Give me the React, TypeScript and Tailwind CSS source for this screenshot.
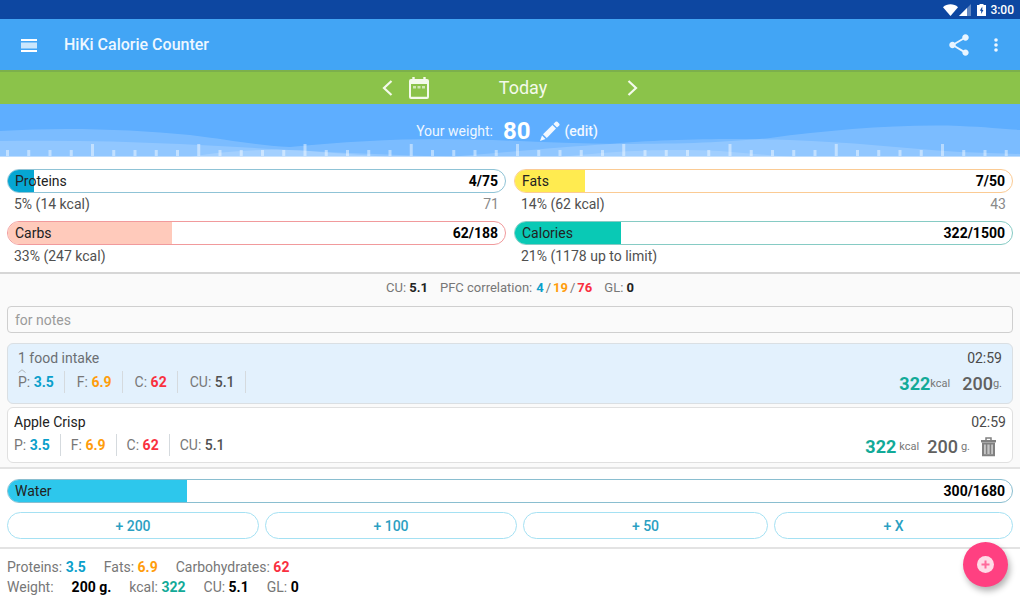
import React from 'react';
import { MdShare } from 'react-icons/md';

type Bar = {
  id: string;
  label: string;
  value: string;
  percent: number;
  fill: string;
  border: string;
  note?: string;
  rest?: string;
};

const leftBars: Bar[] = [
  { id: 'proteins', label: 'Proteins', value: '4/75', percent: 5.2, fill: 'bg-[#06a6d2]', border: 'border-[#8fc3d6]', note: '5% (14 kcal)', rest: '71' },
  { id: 'carbs', label: 'Carbs', value: '62/188', percent: 33, fill: 'bg-[#ffcabb]', border: 'border-[#f19a9c]', note: '33% (247 kcal)' },
];

const rightBars: Bar[] = [
  { id: 'fats', label: 'Fats', value: '7/50', percent: 14, fill: 'bg-[#ffeb50]', border: 'border-[#fbcb94]', note: '14% (62 kcal)', rest: '43' },
  { id: 'calories', label: 'Calories', value: '322/1500', percent: 21.4, fill: 'bg-[#09c9b5]', border: 'border-[#86cbc4]', note: '21% (1178 up to limit)' },
];

const water: Bar = { id: 'water', label: 'Water', value: '300/1680', percent: 17.8, fill: 'bg-[#2dc7ec]', border: 'border-[#8abed0]' };

const ticks = Array.from({ length: 48 }, (_, i) => ({ x: 7.5 + i * 21.25, long: i % 5 === 4 }));

function StatusBar() {
  return (
    <div className="flex h-[19px] items-center justify-end bg-[#0d47a1] pr-1.5 text-white">
      <svg className="h-3 w-[15px]" viewBox="0 0 15 12" fill="currentColor">
        <path d="M0 3.2C4-.6 11-.6 15 3.2L7.5 12z" />
      </svg>
      <svg className="ml-px h-3 w-3" viewBox="0 0 12 12" fill="currentColor">
        <path d="M12 0v12H0z" opacity=".35" />
        <path d="M8 4v8H0z" />
      </svg>
      <svg className="ml-1.5 h-3 w-[9px]" viewBox="0 0 9 12">
        <path d="M2.5 0h4v1H9v11H0V1h2.5z" fill="currentColor" />
        <path d="M5.3 2.5 2.8 6.8h1.4v3.3L6.4 6H5.3z" fill="#0d47a1" />
      </svg>
      <span className="ml-1 text-xs font-medium">3:00</span>
    </div>
  );
}

function AppBar() {
  return (
    <header className="flex h-[51px] items-center bg-[#42a5f5] pl-5 pr-3.5 pt-px text-white">
      <button aria-label="Menu" className="flex w-[17px] justify-center">
        <svg className="h-[13px] w-4" viewBox="0 0 16 13" fill="currentColor">
          <path d="M0 0h16v2H0zM0 11h16v2H0z" />
          <path d="M0 3.5h16v6H0z" opacity=".72" />
        </svg>
      </button>
      <h1 className="ml-[27px] text-base font-medium text-[#eef7ff]">HiKi Calorie Counter</h1>
      <button aria-label="Share" className="ml-auto text-[#e9f5ff]">
        <MdShare size={26} />
      </button>
      <button aria-label="More" className="ml-3.5 flex w-5 justify-center text-[#eef7ff]">
        <svg className="h-3.5 w-1" viewBox="0 0 4 14" fill="currentColor">
          <circle cx="2" cy="2" r="1.8" />
          <circle cx="2" cy="7" r="1.8" />
          <circle cx="2" cy="12" r="1.8" />
        </svg>
      </button>
    </header>
  );
}

function DateBar() {
  return (
    <nav className="flex h-[34px] items-center justify-center border-t-2 border-[#7cb04c] bg-[#8bc34a] text-[#f4faeb]">
      <div className="flex w-64 items-center">
        <button aria-label="Previous day">
          <svg className="h-4 w-[11px]" viewBox="0 0 11 16" fill="none" stroke="currentColor" strokeWidth="2.2">
            <path d="M9.5 1 2 8l7.5 7" />
          </svg>
        </button>
        <button aria-label="Pick a date" className="ml-4">
          <svg className="h-[22px] w-5" viewBox="0 0 20 22" fill="currentColor">
            <path
              fillRule="evenodd"
              d="M3.3 0h2.4v2h8.6V0h2.4v2H18a2 2 0 0 1 2 2v16a2 2 0 0 1-2 2H2a2 2 0 0 1-2-2V4a2 2 0 0 1 2-2h1.3zM2 7v12.8h16V7z"
            />
            <path d="M4 9h3v2.6H4zM8.5 9h3v2.6h-3zM13 9h3v2.6h-3z" opacity=".65" />
          </svg>
        </button>
        <span className="flex-1 pr-2.5 text-center text-lg leading-6">Today</span>
        <button aria-label="Next day">
          <svg className="h-4 w-[11px]" viewBox="0 0 11 16" fill="none" stroke="currentColor" strokeWidth="2.2">
            <path d="M1.5 1 9 8l-7.5 7" />
          </svg>
        </button>
      </div>
    </nav>
  );
}

function WeightPanel() {
  return (
    <section className="relative flex h-[53px] items-center justify-center bg-[#5eaeff] text-white">
      <svg className="absolute inset-0 h-full w-full" viewBox="0 0 1020 53" preserveAspectRatio="none" fill="#fff">
        <path opacity=".18" d="M0 27C60 23 130 25 190 31C230 36 255 41 290 43C340 38 390 35 440 35C500 35 560 40 620 40C690 40 730 38 770 34C830 26 900 20 960 22C985 23 1005 25 1020 26V53H0z" />
        <path opacity=".17" d="M0 37C60 36 120 37 180 40C240 43 290 46 350 49L450 53H0z" />
        <path opacity=".17" d="M450 53C510 48 560 43 610 40C660 35 740 34 790 36C850 38 900 44 960 48L1020 50V53z" />
        <path opacity=".17" d="M190 53C220 47 280 43 320 48L390 53z" />
        <path opacity=".15" d="M560 53C600 49 650 44 720 47L790 53z" />
        {ticks.map((t) => (
          <rect key={t.x} x={t.x - 1.5} y={t.long ? 40 : 46} width="3" height={t.long ? 12 : 6} opacity=".45" />
        ))}
        <rect y="52" width="1020" height="1" opacity=".4" />
      </svg>
      <div className="relative flex items-center pr-1.5 text-sm">
        <span className="text-[#eff7ff]">Your weight:</span>
        <span className="ml-2.5 text-2xl font-bold">80</span>
        <button className="ml-2.5 flex items-center gap-1 font-medium text-[#f2f8ff]">
          <svg className="h-5 w-5" viewBox="0 0 20 20" fill="currentColor">
            <path d="M0 20 2 14.5 5.5 18zM3 13.2 12.4 4 16 7.6 6.8 17zM13.4 3 15.6.8Q16.5 0 17.4.8L19.3 2.7Q20 3.5 19.3 4.4L17 6.6z" />
          </svg>
          (edit)
        </button>
      </div>
    </section>
  );
}

function ProgressBar({ bar }: { bar: Bar }) {
  return (
    <div className={`relative flex h-6 items-center justify-between overflow-hidden rounded-full border px-[7px] text-sm ${bar.border}`}>
      <div className={`absolute inset-y-0 left-0 ${bar.fill}`} style={{ width: `${bar.percent}%` }} />
      <span className="relative text-[#222]">{bar.label}</span>
      <span className="relative font-bold text-black">{bar.value}</span>
    </div>
  );
}

function BarColumn({ bars }: { bars: Bar[] }) {
  return (
    <div className="flex-1 space-y-1.5">
      {bars.map((bar) => (
        <div key={bar.id}>
          <ProgressBar bar={bar} />
          <div className="flex h-[22px] items-center justify-between px-[7px] text-sm text-[#505050]">
            <span>{bar.note}</span>
            <span className="text-[#8a8a8a]">{bar.rest}</span>
          </div>
        </div>
      ))}
    </div>
  );
}

function Macros({ padding, trailing }: { padding: string; trailing?: boolean }) {
  const items = [
    { name: 'P', value: '3.5', color: 'font-bold text-[#0a9fcb]' },
    { name: 'F', value: '6.9', color: 'font-bold text-[#ff9d0c]' },
    { name: 'C', value: '62', color: 'font-bold text-[#f9303f]' },
    { name: 'CU', value: '5.1', color: 'font-medium text-[#505050]' },
  ];
  return (
    <div className="flex text-sm leading-[22px] text-[#777]">
      {items.map((item, i) => (
        <span
          key={item.name}
          className={`${padding} first:pl-0 ${trailing || i < items.length - 1 ? 'border-r border-[#d5dade]' : ''}`}
        >
          {item.name}: <span className={item.color}>{item.value}</span>
        </span>
      ))}
    </div>
  );
}

function FoodIntake() {
  return (
    <article className="flex h-[61px] justify-between rounded-md border border-[#dadfe3] bg-[#e3f1fd] px-2.5 pt-[3px]">
      <div>
        <h2 className="text-sm leading-[22px] text-[#6b6f73]">1 food intake</h2>
        <div className="relative pt-0.5">
          <svg className="absolute left-0 top-0 h-1 w-2" viewBox="0 0 8 4" fill="none" stroke="#b0b6bb">
            <path d="M.5 3.5 4 .8l3.5 2.7" />
          </svg>
          <Macros padding="pl-3 pr-2.5" trailing />
        </div>
      </div>
      <div className="text-right">
        <div className="text-sm leading-[22px] text-[#4a4a4a]">02:59</div>
        <div className="flex items-center pt-[3px] text-lg leading-6">
          <span className="font-bold text-[#12aa98]">322</span>
          <span className="text-[11px] text-[#777]">kcal</span>
          <span className="ml-3 font-medium text-[#606060]">200</span>
          <span className="text-[11px] text-[#777]">g.</span>
        </div>
      </div>
    </article>
  );
}

function FoodItem() {
  return (
    <article className="mt-[3px] flex h-14 justify-between rounded-md border border-[#e0e0e0] bg-white px-1.5 pt-[3px]">
      <div>
        <h3 className="text-sm leading-[22px] text-[#222]">Apple Crisp</h3>
        <div className="pt-px">
          <Macros padding="px-2.5" />
        </div>
      </div>
      <div>
        <div className="text-right text-sm leading-[22px] text-[#4a4a4a]">02:59</div>
        <div className="flex items-center justify-end pr-2.5 pt-0.5 text-lg leading-6">
          <span className="font-bold text-[#12aa98]">322</span>
          <span className="ml-[3px] text-[11px] text-[#777]">kcal</span>
          <span className="ml-2 font-medium text-[#606060]">200</span>
          <span className="ml-[3px] text-[11px] text-[#777]">g.</span>
          <button aria-label="Delete" className="ml-[11px]">
            <svg className="h-5 w-[15px]" viewBox="0 0 15 20" fill="none" stroke="#808080">
              <path d="M5 3V1h5v2" strokeWidth="1.5" />
              <path d="M0 4.2h15" strokeWidth="2.4" />
              <path d="M2 6.5v11.7h11V6.5z" fill="#c4c4c4" strokeWidth="2" />
              <path d="M5.6 7v10M9.4 7v10" strokeWidth="1.5" />
            </svg>
          </button>
        </div>
      </div>
    </article>
  );
}

function Summary() {
  return (
    <footer className="px-[7px] pt-2 text-sm leading-5 text-[#777]">
      <div className="flex gap-[18px]">
        <span>Proteins: <b className="text-[#0a9fcb]">3.5</b></span>
        <span>Fats: <b className="text-[#ff9d0c]">6.9</b></span>
        <span>Carbohydrates: <b className="text-[#f9303f]">62</b></span>
      </div>
      <div className="flex gap-[18px]">
        <span>Weight:</span>
        <b className="text-black">200 g.</b>
        <span>kcal: <b className="text-[#12aa98]">322</b></span>
        <span>CU: <b className="text-black">5.1</b></span>
        <span>GL: <b className="text-black">0</b></span>
      </div>
    </footer>
  );
}

export default function App() {
  return (
    <div className="min-h-screen bg-white font-['Roboto',sans-serif]">
      <StatusBar />
      <AppBar />
      <DateBar />
      <WeightPanel />

      {/* Daily totals */}
      <section className="flex gap-2 border-b-2 border-[#d6d6d6] px-[7px] pb-[5px] pt-3">
        <BarColumn bars={leftBars} />
        <BarColumn bars={rightBars} />
      </section>

      {/* Notes and meals */}
      <section className="border-b-2 border-[#e3e3e3] bg-[#fafafa] px-[7px] pb-1">
        <div className="mb-1 flex h-7 items-center justify-center gap-3 text-[13px] text-[#777]">
          <span>CU: <b className="text-[#222]">5.1</b></span>
          <span className="flex gap-0.5">
            <span className="pr-0.5">PFC correlation:</span>
            <b className="text-[#0a9fcb]">4</b>/<b className="text-[#ff9d0c]">19</b>/<b className="text-[#f9303f]">76</b>
          </span>
          <span>GL: <b className="text-[#222]">0</b></span>
        </div>
        <input
          aria-label="Notes"
          placeholder="for notes"
          className="mb-2.5 block h-[27px] w-full rounded border border-[#cfcfcf] bg-[#fafafa] px-[7px] text-sm outline-none placeholder:text-[#9b9b9b]"
        />
        <FoodIntake />
        <FoodItem />
      </section>

      {/* Water */}
      <section className="border-b-2 border-[#e3e3e3] px-[7px] pb-2 pt-2.5">
        <ProgressBar bar={water} />
        <div className="mt-[9px] grid grid-cols-[252fr_252fr_245fr_239fr] gap-1.5">
          {['+ 200', '+ 100', '+ 50', '+ X'].map((label) => (
            <button key={label} className="h-[27px] rounded-full border border-[#a5e1f3] text-sm font-medium text-[#2b9fc2]">
              {label}
            </button>
          ))}
        </div>
      </section>

      <Summary />

      <button
        aria-label="Add food"
        className="fixed bottom-3 right-3 flex size-[45px] items-center justify-center rounded-full bg-[#ff4081] shadow-[2px_4px_6px_rgba(0,0,0,0.3)]"
      >
        <svg className="size-[17px]" viewBox="0 0 17 17">
          <circle cx="8.5" cy="8.5" r="8.5" fill="#ffdbe7" />
          <path d="M8.5 4.5v8M4.5 8.5h8" stroke="#ff6a9c" strokeWidth="2" />
        </svg>
      </button>
    </div>
  );
}
